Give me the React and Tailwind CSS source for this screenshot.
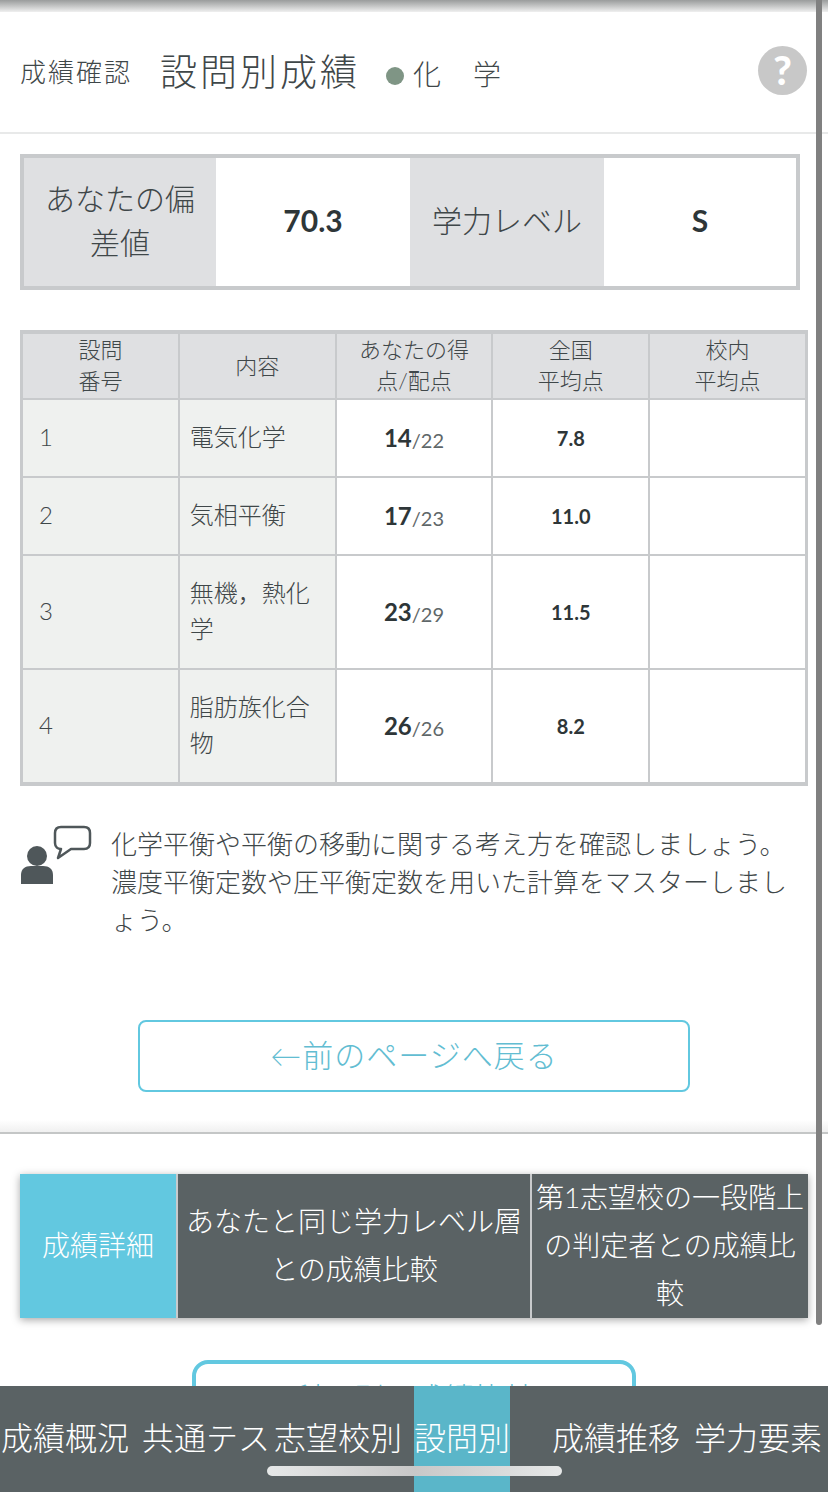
const font = "font-['Lato','Noto_Sans_CJK_JP',sans-serif]";

const rows = [
  { no: '1', title: '電気化学', score: '14', max: '22', avg: '7.8', h: 'h-[76px]' },
  { no: '2', title: '気相平衡', score: '17', max: '23', avg: '11.0', h: 'h-[76px]' },
  { no: '3', title: '無機，熱化学', score: '23', max: '29', avg: '11.5', h: 'h-[112px]' },
  { no: '4', title: '脂肪族化合物', score: '26', max: '26', avg: '8.2', h: 'h-[112px]' },
];

function PersonIcon() {
  return (
    <svg width="74" height="60" viewBox="0 0 74 60" className="shrink-0">
      <circle cx="17" cy="32" r="10" fill="#4f575a" />
      <path d="M1 60v-9c0-6 4-9 10-9h12c6 0 10 3 10 9v9z" fill="#4f575a" />
      <path
        d="M41 3h23c4 0 6 2 6 6v10c0 4-2 6-6 6H51L38 34l3-9c-3 0-6-2-6-6V9c0-4 2-6 6-6z"
        fill="none"
        stroke="#4f575a"
        strokeWidth="2.5"
        strokeLinejoin="round"
      />
    </svg>
  );
}

export default function App() {
  return (
    <div className={`${font} relative h-[1492px] w-[828px] overflow-hidden bg-white text-[#3f4749]`}>
      <div className="h-3 bg-gradient-to-b from-[#9a9c9c] to-[#f0f0f0]" />

      <header className="flex h-[120px] items-center pl-5 pr-[21px] font-light">
        <span className="text-[26px] tracking-[2px]">成績確認</span>
        <h1 className="ml-[28px] text-[37px] font-light tracking-[3px]">設問別成績</h1>
        <span className="ml-[26px] mt-2 h-[18px] w-[18px] rounded-full bg-[#7f9585]" />
        <span className="ml-[9px] mt-1 whitespace-pre text-[28px] tracking-[2px]">化　学</span>
        <span className="mb-1 ml-auto flex h-[49px] w-[49px] items-center justify-center rounded-full bg-[#c8c8c8] text-[40px] font-black text-white">
          ?
        </span>
      </header>
      <div className="h-[2px] bg-[#e8e9e9]" />

      <main className="px-5 pt-5">
        <div className="grid h-[136px] w-[780px] grid-cols-[192px_194px_194px_192px] border-4 border-[#c8cacc] text-[30px] font-light">
          <div className="flex items-center justify-center bg-[#dfe0e2] px-5 pb-1 text-center leading-[44px]">あなたの偏差値</div>
          <div className="flex items-center justify-center pb-1 text-[30px] font-bold text-[#2e3638]">70.3</div>
          <div className="flex items-center justify-center bg-[#dfe0e2] pb-1">学力レベル</div>
          <div className="flex items-center justify-center pb-1 text-[30px] font-bold text-[#2e3638]">S</div>
        </div>

        <div className="mt-10 grid w-[788px] grid-cols-5 gap-[2px] border-x-[3px] border-y-4 border-[#c8cacc] bg-[#c8cacc] text-[22px] font-light">
          {[['設問', '番号'], ['内容'], ['あなたの得', '点/配点'], ['全国', '平均点'], ['校内', '平均点']].map((head, i) => (
            <div key={i} className="flex h-[64px] flex-col items-center justify-center bg-[#dfe0e2] pb-[2px] leading-[31px]">
              {head.map((line) => <span key={line}>{line}</span>)}
            </div>
          ))}
          {rows.map((r) => (
            <div key={r.no} className="contents">
              <div className={`${r.h} flex items-center bg-[#eff1ef] pb-[2px] pl-4 text-[24px]`}>{r.no}</div>
              <div className={`${r.h} flex items-center bg-[#eff1ef] px-[10px] pb-[2px] text-[24px] leading-9`}>{r.title}</div>
              <div className={`${r.h} flex items-center justify-center bg-white`}>
                <span className="text-[24px] font-bold text-[#2e3638]">{r.score}</span>
                <span className="mt-1 text-[20px] font-normal text-[#5f6769]">/{r.max}</span>
              </div>
              <div className={`${r.h} flex items-center justify-center bg-white text-[20px] font-bold text-[#2e3638]`}>{r.avg}</div>
              <div className={`${r.h} bg-white`} />
            </div>
          ))}
        </div>

        <div className="mt-[38px] flex">
          <PersonIcon />
          <p className="ml-[17px] mt-px w-[680px] text-[26px] font-light leading-[38px] [line-break:anywhere]">
            化学平衡や平衡の移動に関する考え方を確認しましょう。濃度平衡定数や圧平衡定数を用いた計算をマスターしましょう。
          </p>
        </div>

        <button className="mx-auto mt-[81px] flex h-[72px] w-[552px] items-center justify-center rounded-lg border-2 border-[#62c8e0] pb-[2px] text-[31px] font-light tracking-[1px] text-[#62bdd2]">
          ←前のページへ戻る
        </button>
      </main>

      <div className="mt-7 h-[14px] border-b-2 border-[#c4c6c6] bg-gradient-to-b from-white to-[#f0f0f0]" />

      <nav className="mx-5 mt-10 grid h-[144px] w-[788px] grid-cols-[156px_352px_276px] grid-rows-[144px] gap-[2px] bg-[#c8cacc] text-[28px] font-light leading-[48px] text-white shadow-[0_2px_8px_rgba(0,0,0,0.35)]">
        <div className="flex items-center justify-center bg-[#62c8e0] pb-[2px]">成績詳細</div>
        <div className="flex items-center justify-center bg-[#5a6264] px-2 pb-[2px] text-center">あなたと同じ学力レベル層との成績比較</div>
        <div className="flex items-center justify-center bg-[#5a6264] pb-[2px] text-center">第1志望校の一段階上の判定者との成績比較</div>
      </nav>

      <button className="mx-auto mt-[42px] flex h-[72px] w-[444px] justify-center rounded-2xl border-4 border-[#62c8e0] pt-[11px] text-[30px] font-light text-[#62bdd2]">
        科目別の成績比較
      </button>

      {/* overlays: scrollbar, fixed tab bar, home indicator */}
      <div className="absolute right-[6px] top-0 h-[1325px] w-[6px] rounded-b bg-[#808080]" />

      <div className="absolute bottom-0 left-0 flex h-[106px] w-[828px] bg-[#5a6264] text-[32px] font-light text-white">
        <div className="flex w-[130px] justify-center whitespace-nowrap pt-[28px]">成績概況</div>
        <div className="ml-2 flex w-[136px] justify-center whitespace-nowrap pt-[28px]">共通テス</div>
        <div className="flex w-[128px] justify-center whitespace-nowrap pt-[28px]">志望校別</div>
        <div className="ml-3 flex w-[96px] justify-center whitespace-nowrap bg-[#5ab6c9] pt-[28px]">設問別</div>
        <div className="ml-[42px] flex w-[128px] justify-center whitespace-nowrap pt-[28px]">成績推移</div>
        <div className="ml-[14px] flex w-[128px] justify-center whitespace-nowrap pt-[28px]">学力要素</div>
      </div>
      <div className="absolute bottom-[16px] left-[267px] h-[10px] w-[295px] rounded-full bg-gradient-to-r from-[#e6e8e8] via-[#c8c8c8] to-[#e6e8e8]" />
    </div>
  );
}
